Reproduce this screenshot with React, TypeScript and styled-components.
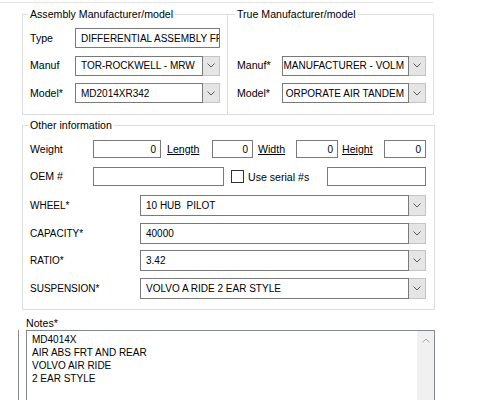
import React from "react";
import styled, { createGlobalStyle } from "styled-components";

const GlobalStyle = createGlobalStyle`
  html, body {
    margin: 0;
    padding: 0;
    background: #ffffff;
  }
  body {
    font-family: "Liberation Sans", Arial, sans-serif;
    font-size: 10.6px;
    color: #000000;
  }
`;

const Page = styled.div`
  width: 500px;
  height: 400px;
  overflow: hidden;
  background: #ffffff;
`;

const TopEdge = styled.div`
  width: 433px;
  height: 2px;
  border-bottom: 1px solid #e3e3e3;
`;

const GroupRow = styled.div`
  display: flex;
  margin: 4.5px 0 0 22px;
`;

const Group = styled.fieldset<{ $width: number; $overlap?: boolean; $padLeft?: number }>`
  box-sizing: border-box;
  width: ${(p) => p.$width}px;
  min-width: 0;
  margin: 0 0 0 ${(p) => (p.$overlap ? -1 : 0)}px;
  padding: 0 7px 0 ${(p) => p.$padLeft ?? 7}px;
  border: 1px solid #dcdcdc;
  border-radius: 0;
`;

const Legend = styled.legend`
  margin-left: -2px;
  padding: 0 2px;
  line-height: 13px;
  font-size: 10.6px;
`;

const PairGrid = styled.div`
  display: grid;
  grid-template-columns: 45px 1fr;
  grid-auto-rows: 20px;
  row-gap: 7.5px;
  align-items: center;
  padding: 7.5px 0 11px 0;
`;

const Label = styled.span<{ $caps?: boolean }>`
  font-size: ${(p) => (p.$caps ? "10px" : "10.6px")};
  line-height: 13px;
  white-space: nowrap;
`;

const TextBox = styled.div<{ $width?: number; $height?: number; $right?: boolean }>`
  box-sizing: border-box;
  ${(p) => (p.$width ? `width: ${p.$width}px; flex: none;` : "")}
  height: ${(p) => p.$height ?? 20}px;
  border: 1px solid #7a7a7a;
  background: #ffffff;
  display: flex;
  align-items: center;
  justify-content: ${(p) => (p.$right ? "flex-end" : "flex-start")};
  padding: ${(p) => (p.$right ? "0 4px 0 0" : "0 0 0 5px")};
  font-size: 10px;
  white-space: nowrap;
  overflow: hidden;
`;

const Combo = styled.div<{ $height?: number }>`
  box-sizing: border-box;
  height: ${(p) => p.$height ?? 20}px;
  display: flex;
  min-width: 0;
`;

const ComboText = styled.div<{ $alignEnd?: boolean }>`
  flex: 1;
  min-width: 0;
  border: 1px solid #7a7a7a;
  background: #ffffff;
  display: flex;
  align-items: center;
  justify-content: ${(p) => (p.$alignEnd ? "flex-end" : "flex-start")};
  padding: 0 ${(p) => (p.$alignEnd ? "4px" : "0")} 0 ${(p) => (p.$alignEnd ? "0" : "5px")};
  font-size: 10px;
  white-space: pre;
  overflow: hidden;
`;

const ComboButton = styled.div`
  box-sizing: border-box;
  width: 17px;
  flex: none;
  background: #e5e5e5;
  border: 1px solid #c4c4c4;
  border-left: none;
  display: flex;
  align-items: center;
  justify-content: center;
`;

const Chevron = ({ up }: { up?: boolean }) => (
  <svg width="8" height="5" viewBox="0 0 8 5">
    <polyline
      points={up ? "0.5,4.5 4,1 7.5,4.5" : "0.5,0.5 4,4 7.5,0.5"}
      fill="none"
      stroke={up ? "#a8a8a8" : "#5a5a5a"}
      strokeWidth="1"
    />
  </svg>
);

const OtherGroup = styled(Group)`
  margin: 3.5px 0 0 22px;
`;

const Rows = styled.div<{ $gap: number; $pad?: string }>`
  display: flex;
  flex-direction: column;
  gap: ${(p) => p.$gap}px;
  padding: ${(p) => p.$pad ?? "0"};
`;

const InlineRow = styled.div<{ $height: number }>`
  display: flex;
  align-items: center;
  height: ${(p) => p.$height}px;
`;

const RowLabel = styled(Label)<{ $width: number }>`
  width: ${(p) => p.$width}px;
  flex: none;
`;

const LinkLabel = styled.span<{ $width: number; $offset: number }>`
  flex: none;
  width: ${(p) => p.$width}px;
  padding-left: ${(p) => p.$offset}px;
  box-sizing: border-box;
  text-decoration: underline;
  line-height: 13px;
`;

const CheckBox = styled.span`
  box-sizing: border-box;
  width: 13px;
  height: 13px;
  border: 1px solid #333333;
  background: #ffffff;
  margin: 0 4px 0 7px;
  flex: none;
`;

const CheckText = styled.span`
  width: 79px;
  flex: none;
  white-space: nowrap;
`;

const ComboGrid = styled.div`
  display: grid;
  grid-template-columns: 110px 286px;
  grid-auto-rows: 21px;
  row-gap: 6.5px;
  align-items: center;
`;

const NotesLabel = styled.div`
  margin: 7px 0 0 26px;
  line-height: 13px;
`;

const NotesFrame = styled.div`
  margin-left: 18px;
  padding-left: 7px;
  border-left: 1px solid #8a8a8a;
`;

const NotesArea = styled.div`
  box-sizing: border-box;
  width: 409px;
  height: 80px;
  border: 1px solid #828790;
  display: flex;
`;

const NotesLines = styled.div`
  flex: 1;
  padding: 2.5px 0 0 5px;
  font-size: 10px;
  line-height: 13px;
`;

const ScrollTrack = styled.div`
  width: 17px;
  background: #f0f0f0;
  display: flex;
  justify-content: center;
  padding-top: 7px;
  box-sizing: border-box;
`;

const ComboField = ({ value, height }: { value: string; height?: number }) => (
  <Combo $height={height}>
    <ComboText>{value}</ComboText>
    <ComboButton>
      <Chevron />
    </ComboButton>
  </Combo>
);

const ClippedCombo = ({ value }: { value: string }) => (
  <Combo>
    <ComboText $alignEnd>{value}</ComboText>
    <ComboButton>
      <Chevron />
    </ComboButton>
  </Combo>
);

const specs = [
  { label: "WHEEL*", value: "10 HUB  PILOT" },
  { label: "CAPACITY*", value: "40000" },
  { label: "RATIO*", value: "3.42" },
  { label: "SUSPENSION*", value: "VOLVO A RIDE 2 EAR STYLE" },
];

const notes = ["MD4014X", "AIR ABS FRT AND REAR", "VOLVO AIR RIDE", "2 EAR STYLE"];

export default function App() {
  return (
    <Page>
      <GlobalStyle />
      <TopEdge />
      <GroupRow>
        <Group $width={206}>
          <Legend>Assembly Manufacturer/model</Legend>
          <PairGrid>
            <Label>Type</Label>
            <TextBox>DIFFERENTIAL ASSEMBLY FRONT</TextBox>
            <Label>Manuf</Label>
            <ComboField value="TOR-ROCKWELL - MRW" />
            <Label>Model*</Label>
            <ComboField value="MD2014XR342" />
          </PairGrid>
        </Group>
        <Group $width={207} $overlap $padLeft={9}>
          <Legend>True Manufacturer/model</Legend>
          <PairGrid>
            <span />
            <span />
            <Label>Manuf*</Label>
            <ClippedCombo value="MANUFACTURER - VOLM" />
            <Label>Model*</Label>
            <ClippedCombo value="ORPORATE AIR TANDEM" />
          </PairGrid>
        </Group>
      </GroupRow>

      <OtherGroup $width={413}>
        <Legend>Other information</Legend>
        <Rows $gap={9} $pad="8.5px 0 10px 0">
          <InlineRow $height={18}>
            <RowLabel $width={63}>Weight</RowLabel>
            <TextBox $width={68} $height={18} $right>0</TextBox>
            <LinkLabel $width={51} $offset={6}>Length</LinkLabel>
            <TextBox $width={41} $height={18} $right>0</TextBox>
            <LinkLabel $width={43} $offset={5}>Width</LinkLabel>
            <TextBox $width={42} $height={18} $right>0</TextBox>
            <LinkLabel $width={46} $offset={4}>Height</LinkLabel>
            <TextBox $width={42} $height={18} $right>0</TextBox>
          </InlineRow>
          <InlineRow $height={19}>
            <RowLabel $width={63}>OEM #</RowLabel>
            <TextBox $width={131} $height={19} />
            <CheckBox />
            <CheckText>Use serial #s</CheckText>
            <TextBox $width={99} $height={19} />
          </InlineRow>
          <ComboGrid>
            {specs.map((s) => (
              <React.Fragment key={s.label}>
                <Label $caps>{s.label}</Label>
                <ComboField value={s.value} height={21} />
              </React.Fragment>
            ))}
          </ComboGrid>
        </Rows>
      </OtherGroup>

      <NotesLabel>Notes*</NotesLabel>
      <NotesFrame>
        <NotesArea>
          <NotesLines>
            {notes.map((n) => (
              <div key={n}>{n}</div>
            ))}
          </NotesLines>
          <ScrollTrack>
            <Chevron up />
          </ScrollTrack>
        </NotesArea>
      </NotesFrame>
    </Page>
  );
}
